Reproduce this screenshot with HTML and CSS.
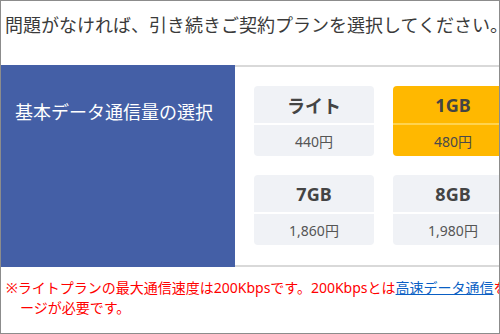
FILE: index.html
```html
<!DOCTYPE html>
<html lang="ja">
<head>
<meta charset="utf-8">
<title>プラン選択</title>
<link rel="stylesheet" href="styles.css">
</head>
<body>
<div class="frame">
  <div class="page">
    <p class="lead">問題がなければ、引き続きご契約プランを選択してください。</p>
    <div class="plan-table">
      <div class="plan-head">基本データ通信量の選択</div>
      <div class="plan-body">
        <div class="cards">
          <div class="card"><div class="card-name">ライト</div><div class="card-price">440円</div></div>
          <div class="card selected"><div class="card-name">1GB</div><div class="card-price">480円</div></div>
          <div class="card"><div class="card-name">3GB</div><div class="card-price">880円</div></div>
          <div class="card"><div class="card-name">5GB</div><div class="card-price">1,280円</div></div>
          <div class="card"><div class="card-name">7GB</div><div class="card-price">1,860円</div></div>
          <div class="card"><div class="card-name">8GB</div><div class="card-price">1,980円</div></div>
          <div class="card"><div class="card-name">10GB</div><div class="card-price">2,380円</div></div>
          <div class="card"><div class="card-name">20GB</div><div class="card-price">3,980円</div></div>
        </div>
      </div>
    </div>
    <p class="note">※ライトプランの最大通信速度は200Kbpsです。200Kbpsとは<a href="#">高速データ通信</a>をご利用になれない速度です。高速通信をご利用の際はチャ<br>ージが必要です。</p>
  </div>
</div>
</body>
</html>
```
FILE: styles.css
```css
html, body {
  margin: 0;
  padding: 0;
  background: #ffffff;
}
.frame {
  width: 500px;
  height: 334px;
  box-sizing: border-box;
  border: 1px solid #8c8c8c;
  overflow: hidden;
  font-family: "Noto Sans", "Noto Sans CJK JP", sans-serif;
}
.page {
  width: 900px;
}
.lead {
  margin: 0;
  padding: 11px 4px 0 4px;
  font-size: 18px;
  line-height: 26px;
  color: #3a3a3a;
  white-space: nowrap;
}
.plan-table {
  display: flex;
  margin-top: 27px;
}
.plan-head {
  width: 220px;
  flex: none;
  background: #445fa6;
  color: #ffffff;
  font-size: 18px;
  line-height: 26px;
  padding: 34px 0 0 14px;
}
.plan-body {
  flex: 1;
  border-top: 2px solid #d9d9d9;
  border-bottom: 2px solid #d9d9d9;
  padding: 19px 0 20px 19px;
}
.cards {
  display: grid;
  grid-template-columns: repeat(4, 120px);
  gap: 19px;
}
.card {
  background: #f0f2f6;
  border-radius: 4px;
  height: 70px;
  display: flex;
  flex-direction: column;
  color: #444444;
}
.card-name {
  height: 37px;
  border-bottom: 2px solid #ffffff;
  display: flex;
  align-items: center;
  justify-content: center;
  font-size: 18px;
  font-weight: bold;
}
.card-price {
  flex: 1;
  display: flex;
  align-items: center;
  justify-content: center;
  font-size: 14px;
  color: #555555;
}
.card.selected {
  background: #ffb800;
}
.card.selected .card-name {
  border-bottom-color: #ffd34f;
}
.card.selected .card-price {
  color: #4a4a4a;
}
.note {
  margin: 11px 0 0 0;
  padding-left: 19px;
  text-indent: -14px;
  font-size: 14px;
  line-height: 20px;
  color: #ff0000;
  white-space: nowrap;
}
.note a {
  color: #0a5fc4;
  text-decoration: underline;
}
```
